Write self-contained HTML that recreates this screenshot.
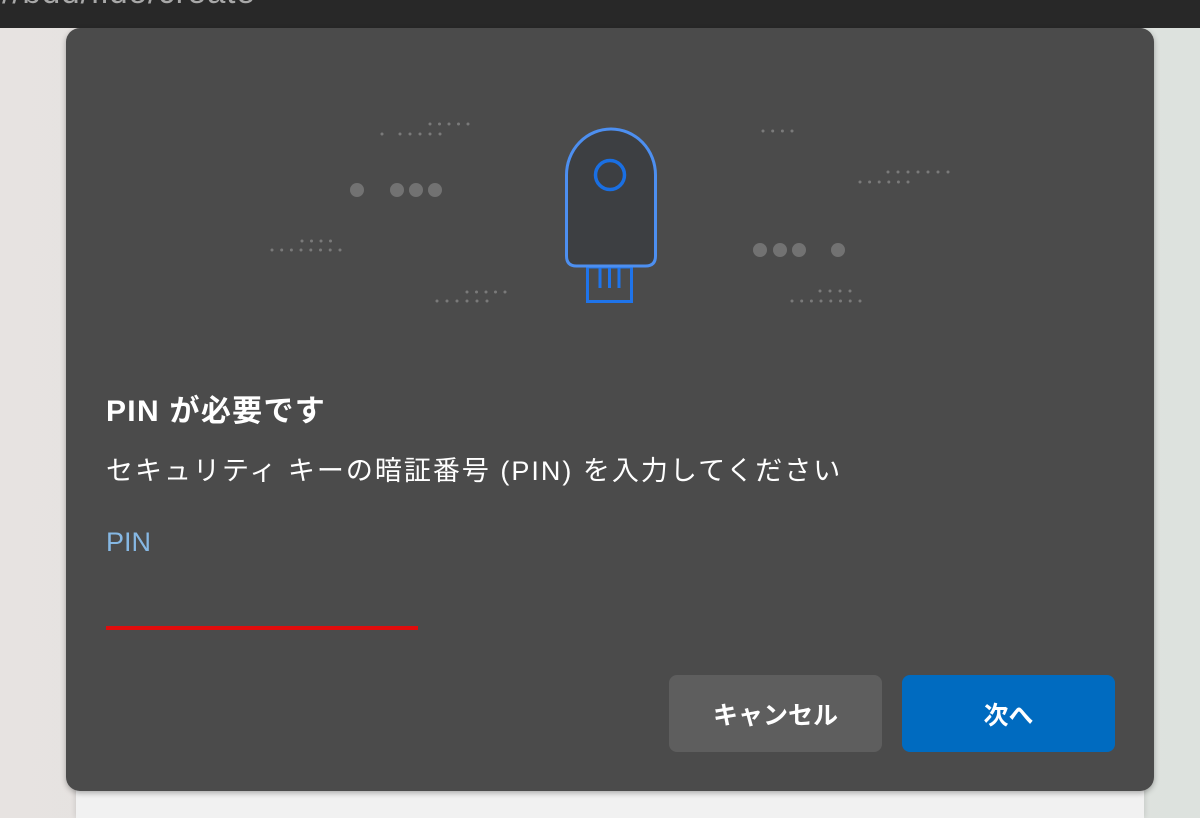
<!DOCTYPE html>
<html><head><meta charset="utf-8"><style>
*{margin:0;padding:0;box-sizing:border-box}
html,body{width:1200px;height:818px;overflow:hidden}
body{position:relative;background:linear-gradient(90deg,#e7e3e1 0,#e2e0de 50%,#dde2de 100%);font-family:"Liberation Sans","Noto Sans CJK JP",sans-serif}
.top{position:absolute;left:0;top:0;width:1200px;height:28px;background:#282828;overflow:hidden}
.url{position:absolute;left:-8px;top:-27px;font-size:33px;color:#a8a8a8;letter-spacing:1px}
.card{position:absolute;left:76px;top:780px;width:1068px;height:38px;background:#f1f1f1;box-shadow:0 0 6px rgba(0,0,0,.15)}
.dlg{position:absolute;left:66px;top:28px;width:1088px;height:763px;background:#4b4b4b;border-radius:14px;box-shadow:0 2px 6px rgba(0,0,0,.3)}
.t{position:absolute;color:#fff;white-space:nowrap}
.btn{position:absolute;top:675px;width:213px;height:77px;border-radius:8px;color:#fff;font-weight:bold;font-size:25px;display:flex;align-items:center;justify-content:center}
</style></head><body>
<div class="top"><div class="url">://bdd/fido/create</div></div>
<div class="card"></div>
<div class="dlg"></div>
<svg style="position:absolute;left:0;top:0" width="1200" height="818">
<g fill="#727272">
<circle cx="357" cy="190" r="7"/><circle cx="397" cy="190" r="7"/><circle cx="416" cy="190" r="7"/><circle cx="435" cy="190" r="7"/>
<circle cx="760" cy="250" r="7"/><circle cx="780" cy="250" r="7"/><circle cx="799" cy="250" r="7"/><circle cx="838" cy="250" r="7"/>
</g>
<g fill="#7a7a7a">
<circle cx="430" cy="124" r="1.5"/><circle cx="439.5" cy="124" r="1.5"/><circle cx="449" cy="124" r="1.5"/><circle cx="458.5" cy="124" r="1.5"/><circle cx="468" cy="124" r="1.5"/>
<circle cx="382" cy="134" r="1.5"/><circle cx="400" cy="134" r="1.5"/><circle cx="410" cy="134" r="1.5"/><circle cx="420" cy="134" r="1.5"/><circle cx="430" cy="134" r="1.5"/><circle cx="440" cy="134" r="1.5"/>
<circle cx="302" cy="241" r="1.5"/><circle cx="311.5" cy="241" r="1.5"/><circle cx="321" cy="241" r="1.5"/><circle cx="330.5" cy="241" r="1.5"/>
<circle cx="272" cy="250" r="1.5"/><circle cx="281.7" cy="250" r="1.5"/><circle cx="291.4" cy="250" r="1.5"/><circle cx="301" cy="250" r="1.5"/><circle cx="310.8" cy="250" r="1.5"/><circle cx="320.5" cy="250" r="1.5"/><circle cx="330.2" cy="250" r="1.5"/><circle cx="340" cy="250" r="1.5"/>
<circle cx="467" cy="292" r="1.5"/><circle cx="476.5" cy="292" r="1.5"/><circle cx="486" cy="292" r="1.5"/><circle cx="495.5" cy="292" r="1.5"/><circle cx="505" cy="292" r="1.5"/>
<circle cx="437" cy="301" r="1.5"/><circle cx="447" cy="301" r="1.5"/><circle cx="457" cy="301" r="1.5"/><circle cx="467" cy="301" r="1.5"/><circle cx="477" cy="301" r="1.5"/><circle cx="487" cy="301" r="1.5"/>
<circle cx="763" cy="131" r="1.5"/><circle cx="772.7" cy="131" r="1.5"/><circle cx="782.4" cy="131" r="1.5"/><circle cx="792" cy="131" r="1.5"/>
<circle cx="888" cy="172" r="1.5"/><circle cx="898" cy="172" r="1.5"/><circle cx="908" cy="172" r="1.5"/><circle cx="918" cy="172" r="1.5"/><circle cx="928" cy="172" r="1.5"/><circle cx="938" cy="172" r="1.5"/><circle cx="948" cy="172" r="1.5"/>
<circle cx="860" cy="182" r="1.5"/><circle cx="869.6" cy="182" r="1.5"/><circle cx="879.2" cy="182" r="1.5"/><circle cx="888.8" cy="182" r="1.5"/><circle cx="898.4" cy="182" r="1.5"/><circle cx="908" cy="182" r="1.5"/>
<circle cx="820" cy="291" r="1.5"/><circle cx="830" cy="291" r="1.5"/><circle cx="840" cy="291" r="1.5"/><circle cx="850" cy="291" r="1.5"/>
<circle cx="792" cy="301" r="1.5"/><circle cx="801.7" cy="301" r="1.5"/><circle cx="811.4" cy="301" r="1.5"/><circle cx="821" cy="301" r="1.5"/><circle cx="830.8" cy="301" r="1.5"/><circle cx="840.5" cy="301" r="1.5"/><circle cx="850.2" cy="301" r="1.5"/><circle cx="860" cy="301" r="1.5"/>
</g>
<rect x="587.5" y="267" width="44" height="34.5" fill="none" stroke="#1f74ea" stroke-width="3"/>
<g stroke="#1f74ea" stroke-width="3"><line x1="600" y1="268" x2="600" y2="288"/><line x1="609.5" y1="268" x2="609.5" y2="288"/><line x1="619" y1="268" x2="619" y2="288"/></g>
<path d="M566.5 175 A43.5 45 0 0 1 655.5 175 L655.5 256 Q655.5 266 645.5 266 L576.5 266 Q566.5 266 566.5 256 Z" fill="#3d3f42" stroke="#4d8ff0" stroke-width="3"/>
<circle cx="610" cy="175" r="14.5" fill="none" stroke="#1a6fe2" stroke-width="3.5"/>
</svg>
<div class="t" style="left:106px;top:386px;font-size:30px;font-weight:bold;letter-spacing:1.3px">PIN が必要です</div>
<div class="t" style="left:106px;top:449px;font-size:27px;letter-spacing:2px">セキュリティ キーの暗証番号 (PIN) を入力してください</div>
<div class="t" style="left:106px;top:527px;font-size:27px;color:#86b8e4">PIN</div>
<div style="position:absolute;left:106px;top:626px;width:312px;height:4px;background:#e00c0c"></div>
<div class="btn" style="left:669px;background:#5e5e5e">キャンセル</div>
<div class="btn" style="left:902px;background:#006bc0">次へ</div>
</body></html>
